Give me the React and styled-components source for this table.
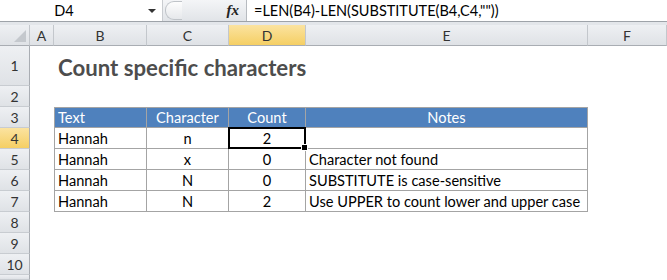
import React from "react"
import styled, { createGlobalStyle, css } from "styled-components"

const Global = createGlobalStyle`
  html, body { margin: 0; padding: 0; background: #fff; overflow: hidden; }
  body { font-family: Lato, "Open Sans", sans-serif; color: #000; }
`

const FormulaBar = styled.div`
  display: flex;
  height: 21px;
  border-bottom: 1px solid #9ea3a9;
  background: #fff;
`

const NameBox = styled.div`
  width: 162px;
  display: flex;
  align-items: center;
  font-size: 14.5px;
  span { flex: 1; text-align: center; padding-right: 20px; }
  i {
    width: 0; height: 0; margin-right: 6px;
    border-left: 4px solid transparent;
    border-right: 4px solid transparent;
    border-top: 4px solid #333;
  }
`

const Splitter = styled.div`
  width: 83px;
  display: flex;
  align-items: center;
  justify-content: space-between;
  background: linear-gradient(#f4f5f7, #e1e4e8);
  border-left: 1px solid #c9ccd0;
  b {
    width: 16px; height: 17px; margin-left: 2px;
    border-radius: 9px 0 0 9px;
    border: 1px solid #bfc3c8; border-right: none;
    background: linear-gradient(#fdfdfd, #e6e8eb);
  }
  em {
    font-family: "Liberation Serif", serif;
    font-weight: bold;
    font-size: 15px;
    color: #222;
    margin-right: 7px;
  }
`

const FormulaInput = styled.div`
  flex: 1;
  display: flex;
  align-items: center;
  padding-left: 7px;
  border-left: 1px solid #b7bbc0;
  font-size: 14.5px;
`

const Band = styled.div`
  height: 3px;
  background: #e3e6ea;
`

const Sheet = styled.div`
  display: grid;
  grid-template-columns: 30px 24px 93px 82px 77px 282px 1fr;
  grid-template-rows: 21px 40px repeat(9, 21px) 5px;
  font-size: 14.6px;
`

const headBg = css`
  background: ${p => p.$active ? "linear-gradient(#fbe3a0, #f5cf64)" : "linear-gradient(#eef0f3, #dfe2e6)"};
  color: #333;
`

const Corner = styled.div`
  ${headBg};
  border-right: 1px solid #c3c7cc;
  border-bottom: 1px solid #a9adb3;
  position: relative;
  &::after {
    content: "";
    position: absolute;
    right: 3px; bottom: 3px;
    border-left: 12px solid transparent;
    border-bottom: 12px solid #c4c8cd;
  }
`

const ColHead = styled.div`
  ${headBg};
  display: flex;
  align-items: center;
  justify-content: center;
  font-size: 14px;
  border-right: 1px solid #c3c7cc;
  border-bottom: 1px solid #a9adb3;
`

const RowHead = styled.div`
  ${headBg};
  display: flex;
  align-items: center;
  justify-content: center;
  font-size: 14px;
  border-right: 1px solid #a9adb3;
  border-bottom: 1px solid #c8ccd1;
`

const Cell = styled.div`
  position: relative;
  display: flex;
  align-items: center;
  white-space: nowrap;
  padding: 0 3px;
  justify-content: ${p => p.$align === "center" ? "center" : "flex-start"};
  ${p => p.$boxed && css`
    border-right: 1px solid #a4a4a4;
    border-bottom: 1px solid #a4a4a4;
  `}
  ${p => p.$first && css`border-left: 1px solid #a4a4a4;`}
  ${p => p.$head && css`
    background: #4f81bd;
    color: #fff;
    border-top: 1px solid #a4a4a4;
  `}
  ${p => p.$selected && css`
    &::after {
      content: "";
      position: absolute;
      left: -1px; top: -1px; right: -1px; bottom: -1px;
      border: 2px solid #000;
    }
    &::before {
      content: "";
      position: absolute;
      right: -3px; bottom: -3px;
      width: 5px; height: 5px;
      background: #000;
      border: 1px solid #fff;
      z-index: 1;
    }
  `}
`

const Title = styled.div`
  grid-column: 3 / 6;
  display: flex;
  align-items: flex-end;
  padding: 0 0 5px 4px;
  white-space: nowrap;
  font-size: 22.2px;
  font-weight: bold;
  color: #4d4d4d;
`

const cols = ["A", "B", "C", "D", "E", "F"]
const aligns = ["left", "center", "center", "left"]
const table = [
  ["Text", "Character", "Count", "Notes"],
  ["Hannah", "n", "2", ""],
  ["Hannah", "x", "0", "Character not found"],
  ["Hannah", "N", "0", "SUBSTITUTE is case-sensitive"],
  ["Hannah", "N", "2", "Use UPPER to count lower and upper case"],
]
const headAligns = ["left", "center", "center", "center"]

const Row = ({ n, label = n, children }) => (
  <>
    <RowHead $active={n === 4}>{label}</RowHead>
    {children}
  </>
)

export default function App() {
  return (
    <>
      <Global />
      <FormulaBar>
        <NameBox><span>D4</span><i /></NameBox>
        <Splitter><b /><em>fx</em></Splitter>
        <FormulaInput>=LEN(B4)-LEN(SUBSTITUTE(B4,C4,""))</FormulaInput>
      </FormulaBar>
      <Band />
      <Sheet>
        <Corner />
        {cols.map(c => <ColHead key={c} $active={c === "D"}>{c}</ColHead>)}

        <Row n={1}>
          <Cell />
          <Title>Count specific characters</Title>
          <Cell />
          <Cell />
        </Row>
        <Row n={2}>
          {cols.map(c => <Cell key={c} />)}
        </Row>
        {table.map((r, i) => (
          <Row key={i} n={i + 3}>
            <Cell />
            {r.map((v, j) => (
              <Cell
                key={j}
                $boxed
                $first={j === 0}
                $head={i === 0}
                $align={i === 0 ? headAligns[j] : aligns[j]}
                $selected={i === 1 && j === 2}
              >
                {v}
              </Cell>
            ))}
            <Cell />
          </Row>
        ))}
        {[8, 9, 10].map(n => (
          <Row key={n} n={n}>
            {cols.map(c => <Cell key={c} />)}
          </Row>
        ))}
        <Row n={11} label="">
          {cols.map(c => <Cell key={c} />)}
        </Row>
      </Sheet>
    </>
  )
}
